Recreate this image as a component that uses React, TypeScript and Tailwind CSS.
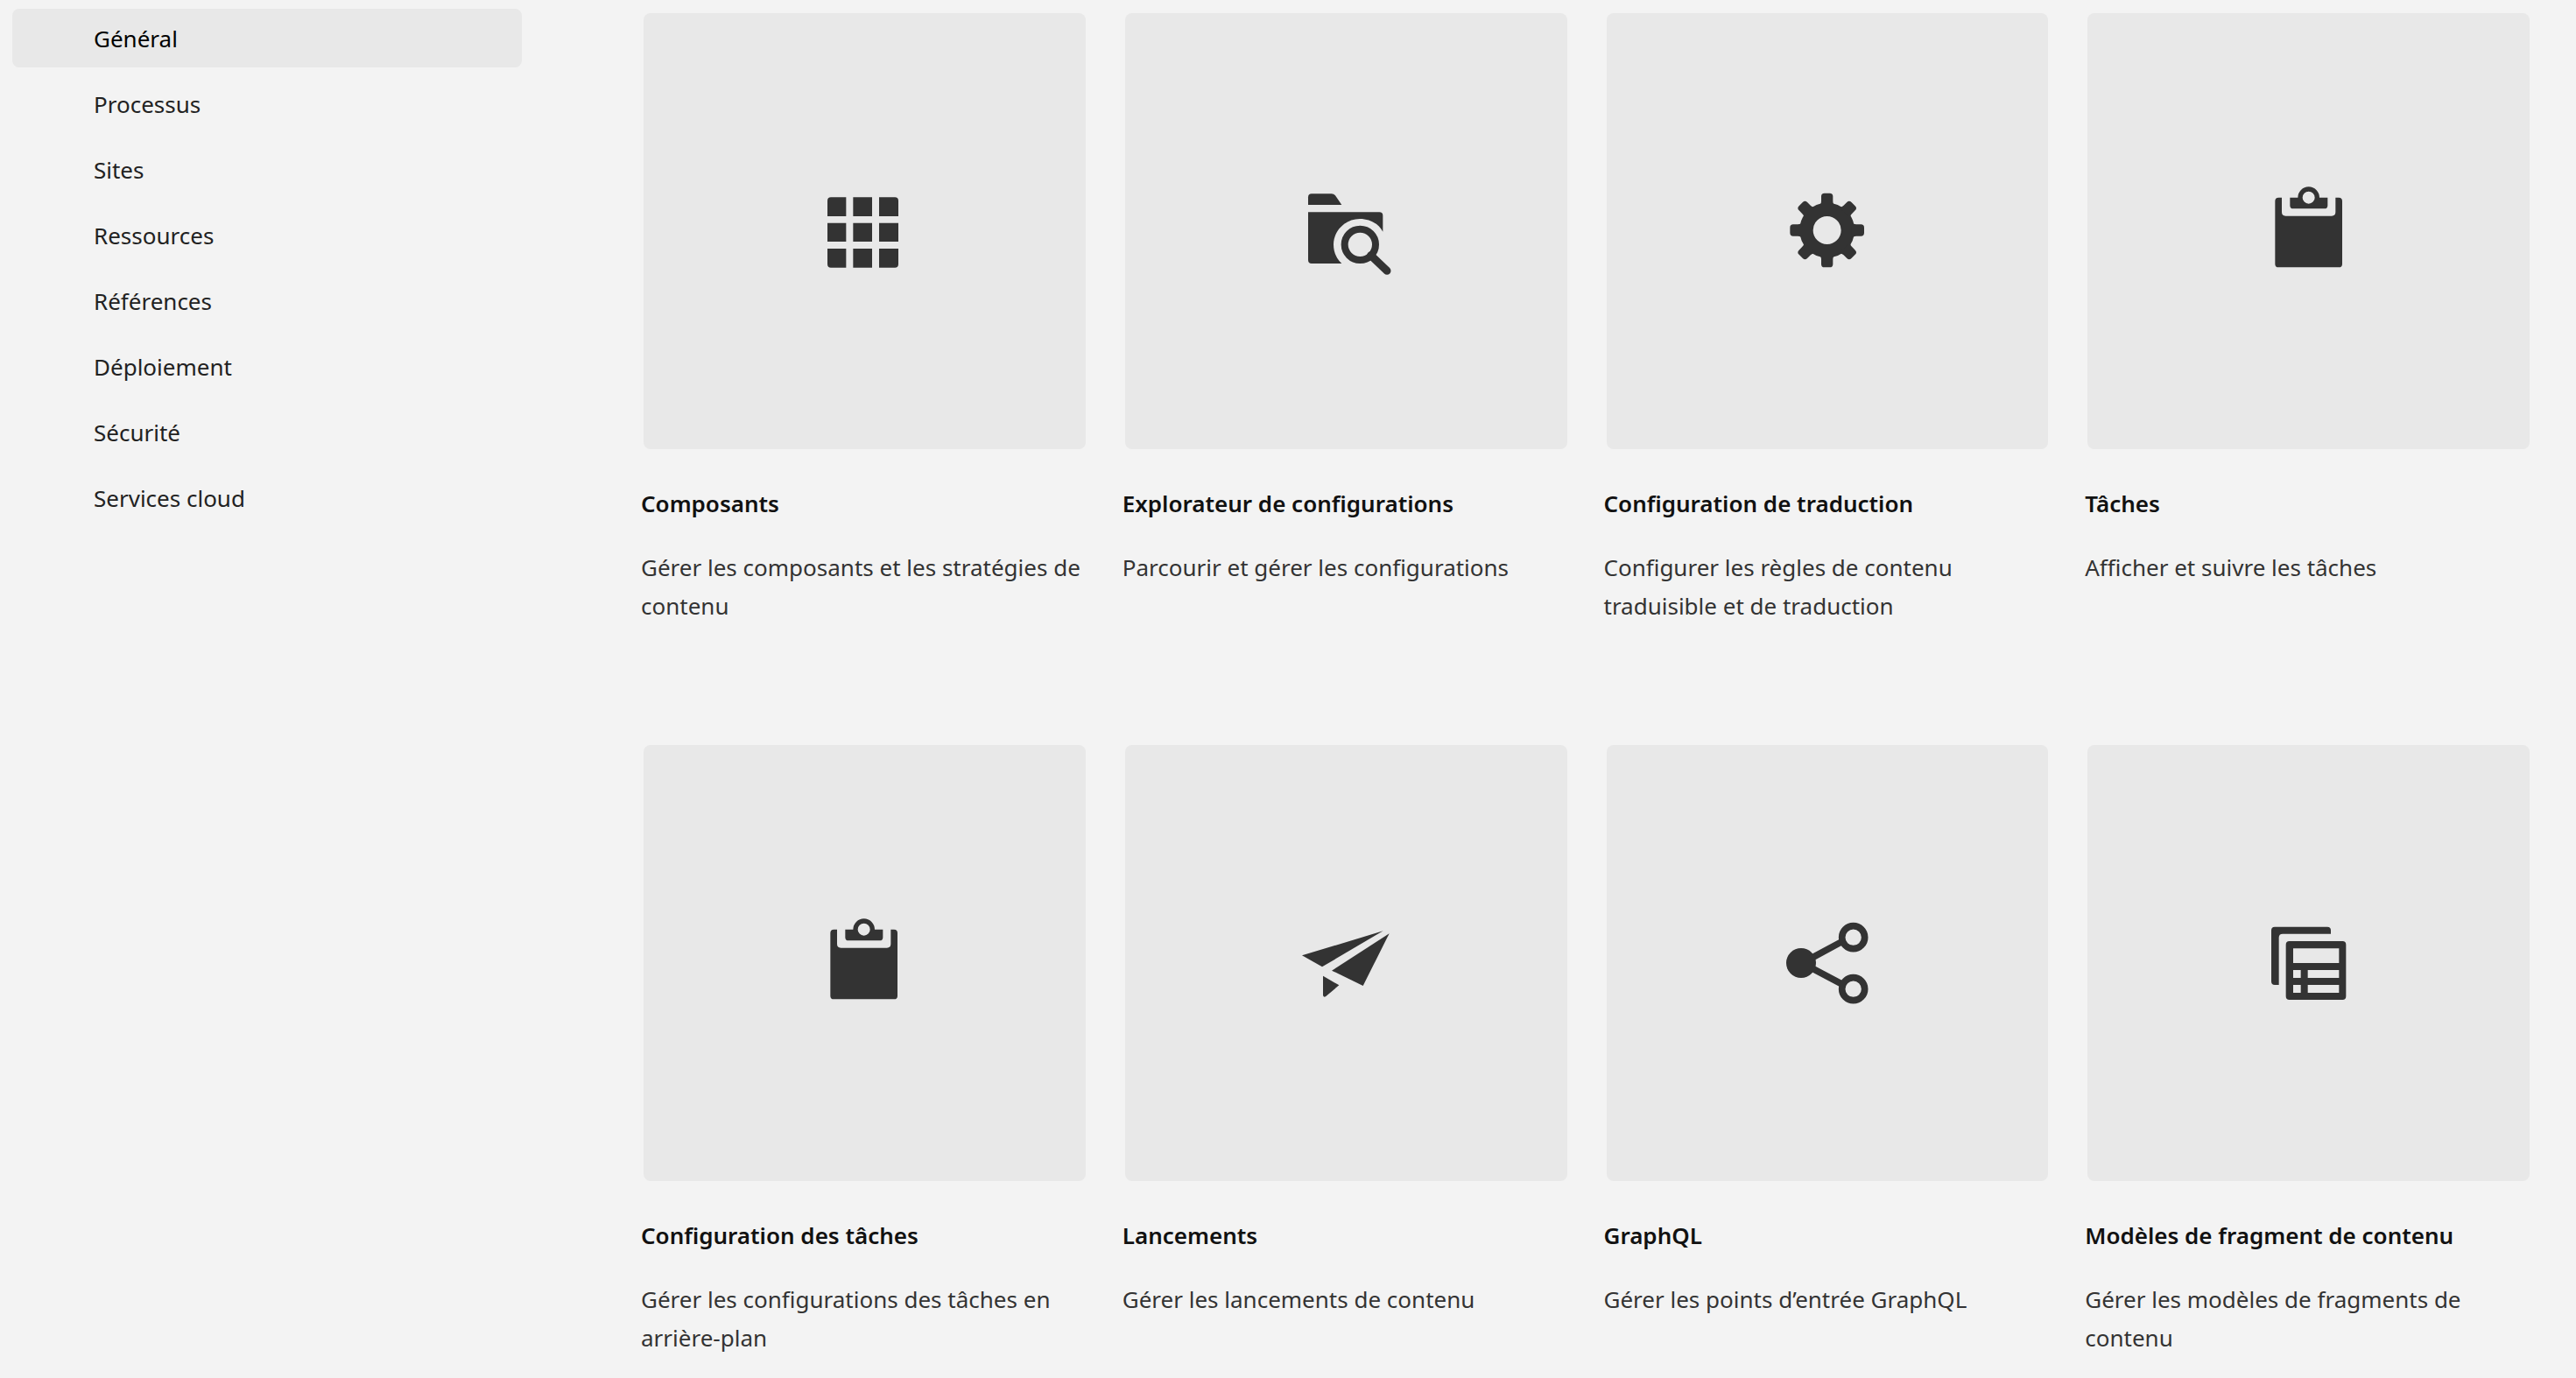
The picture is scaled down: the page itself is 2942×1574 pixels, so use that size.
import type { ReactNode } from "react";

const navItems = [
  "Général",
  "Processus",
  "Sites",
  "Ressources",
  "Références",
  "Déploiement",
  "Sécurité",
  "Services cloud",
];

function Icon({ children }: { children: ReactNode }) {
  return (
    <svg viewBox="6 0 390 390" className="size-[130px] text-[#333333]" fill="currentColor" aria-hidden="true">
      {children}
    </svg>
  );
}

function GridIcon() {
  return (
    <Icon>
      <path d="M87 79H139V144H75V91A12 12 0 0 1 87 79ZM163 79H228V144H163ZM252 79H306A12 12 0 0 1 318 91V144H252ZM75 167H139V231H75ZM163 167H228V231H163ZM252 167H318V231H252ZM75 255H139V320H87A12 12 0 0 1 75 308ZM163 255H228V320H163ZM252 255H318V308A12 12 0 0 1 306 320H252Z" />
    </Icon>
  );
}

function FolderSearchIcon() {
  return (
    <Icon>
      <path d="M84 67H152Q160 67 165 73L187 105H72V79Q72 67 84 67Z" />
      <path d="M72 130H316Q328 130 328 142V197C314 170 284 153 249 153C200 153 159 193 159 241C159 267 169 289 187 306H84Q72 306 72 294Z" />
      <circle cx="250" cy="241" r="53" fill="none" stroke="currentColor" strokeWidth="24" />
      <path d="M287 278L342 331" stroke="currentColor" strokeWidth="27" strokeLinecap="round" />
    </Icon>
  );
}

function GearIcon() {
  const teeth = [0, 45, 90, 135, 180, 225, 270, 315];
  return (
    <Icon>
      <circle cx="200" cy="192" r="71" fill="none" stroke="currentColor" strokeWidth="46" />
      {teeth.map((angle) => (
        <path
          key={angle}
          transform={`rotate(${angle} 200 192)`}
          d="M171 108Q180 103 180 92V76Q180 65 191 65H209Q220 65 220 76V92Q220 103 229 108Z"
        />
      ))}
    </Icon>
  );
}

function ClipboardIcon() {
  return (
    <Icon>
      <path d="M97 80H108V130Q108 143 121 143H279Q292 143 292 130V80H303Q315 80 315 92V308Q315 319 303 319H97Q85 319 85 308V92Q85 80 97 80Z" />
      <path
        fillRule="evenodd"
        d="M136 80H163A37 37 0 0 1 237 80H265V107Q265 118 254 118H147Q136 118 136 107ZM200 59A21 21 0 1 0 200 101A21 21 0 1 0 200 59Z"
      />
    </Icon>
  );
}

function PaperPlaneIcon() {
  return (
    <Icon>
      <path d="M51 169L329 85L120 208Z" />
      <path d="M350 94L260 273L153 221Z" />
      <path d="M123 239L178 271L132 310Q123 314 123 304Z" />
    </Icon>
  );
}

function ShareIcon() {
  return (
    <Icon>
      <circle cx="111" cy="195" r="51" />
      <path d="M145 179L254 120M145 211L254 269" stroke="currentColor" strokeWidth="23" />
      <g fill="none" stroke="currentColor" strokeWidth="23">
        <circle cx="290" cy="107" r="39" />
        <circle cx="290" cy="284" r="39" />
      </g>
    </Icon>
  );
}

function ModelsIcon() {
  return (
    <Icon>
      <path d="M84 71H264Q276 71 276 83V95H111Q98 95 98 108V270H84Q72 270 72 258V83Q72 71 84 71Z" />
      <path
        fillRule="evenodd"
        d="M134 120H316Q328 120 328 132V309Q328 321 316 321H134Q122 321 122 309V132Q122 120 134 120ZM147 145V195H304V145ZM147 219V246H173V219ZM197 219V246H304V219ZM147 270V297H173V270ZM197 270V297H304V270Z"
      />
    </Icon>
  );
}

const cards = [
  { title: "Composants", text: "Gérer les composants et les stratégies de contenu", icon: <GridIcon /> },
  { title: "Explorateur de configurations", text: "Parcourir et gérer les configurations", icon: <FolderSearchIcon /> },
  { title: "Configuration de traduction", text: "Configurer les règles de contenu traduisible et de traduction", icon: <GearIcon /> },
  { title: "Tâches", text: "Afficher et suivre les tâches", icon: <ClipboardIcon /> },
  { title: "Configuration des tâches", text: "Gérer les configurations des tâches en arrière-plan", icon: <ClipboardIcon /> },
  { title: "Lancements", text: "Gérer les lancements de contenu", icon: <PaperPlaneIcon /> },
  { title: "GraphQL", text: "Gérer les points d’entrée GraphQL", icon: <ShareIcon /> },
  { title: "Modèles de fragment de contenu", text: "Gérer les modèles de fragments de contenu", icon: <ModelsIcon /> },
];

export default function App() {
  return (
    <div className="flex min-h-screen bg-[#f3f3f3] pr-[53px] pl-3.5 font-['Noto_Sans',sans-serif] text-[26px] leading-[44px] text-[#222222]">
      <nav aria-label="Outils" className="w-[582px] shrink-0 pt-2.5">
        <ul className="flex flex-col gap-2">
          {navItems.map((item, index) => (
            <li key={item}>
              <a
                href="#"
                aria-current={index === 0 ? "page" : undefined}
                className="flex h-[67px] items-center rounded-lg pl-[93px] aria-[current=page]:bg-[#e8e8e8] aria-[current=page]:text-black"
              >
                {item}
              </a>
            </li>
          ))}
        </ul>
      </nav>
      <main className="ml-[136px] grid flex-1 grid-cols-4 content-start gap-x-[42px] gap-y-[137px] pt-[15px]">
        {cards.map((card) => (
          <a key={card.title} href="#" className="block">
            <div className="ml-[3px] flex h-[498px] items-center justify-center rounded-lg bg-[#e8e8e8]">{card.icon}</div>
            <h2 className="mt-10 font-semibold text-[#111111]">{card.title}</h2>
            <p className="mt-[29px] text-[#333333]">{card.text}</p>
          </a>
        ))}
      </main>
    </div>
  );
}
